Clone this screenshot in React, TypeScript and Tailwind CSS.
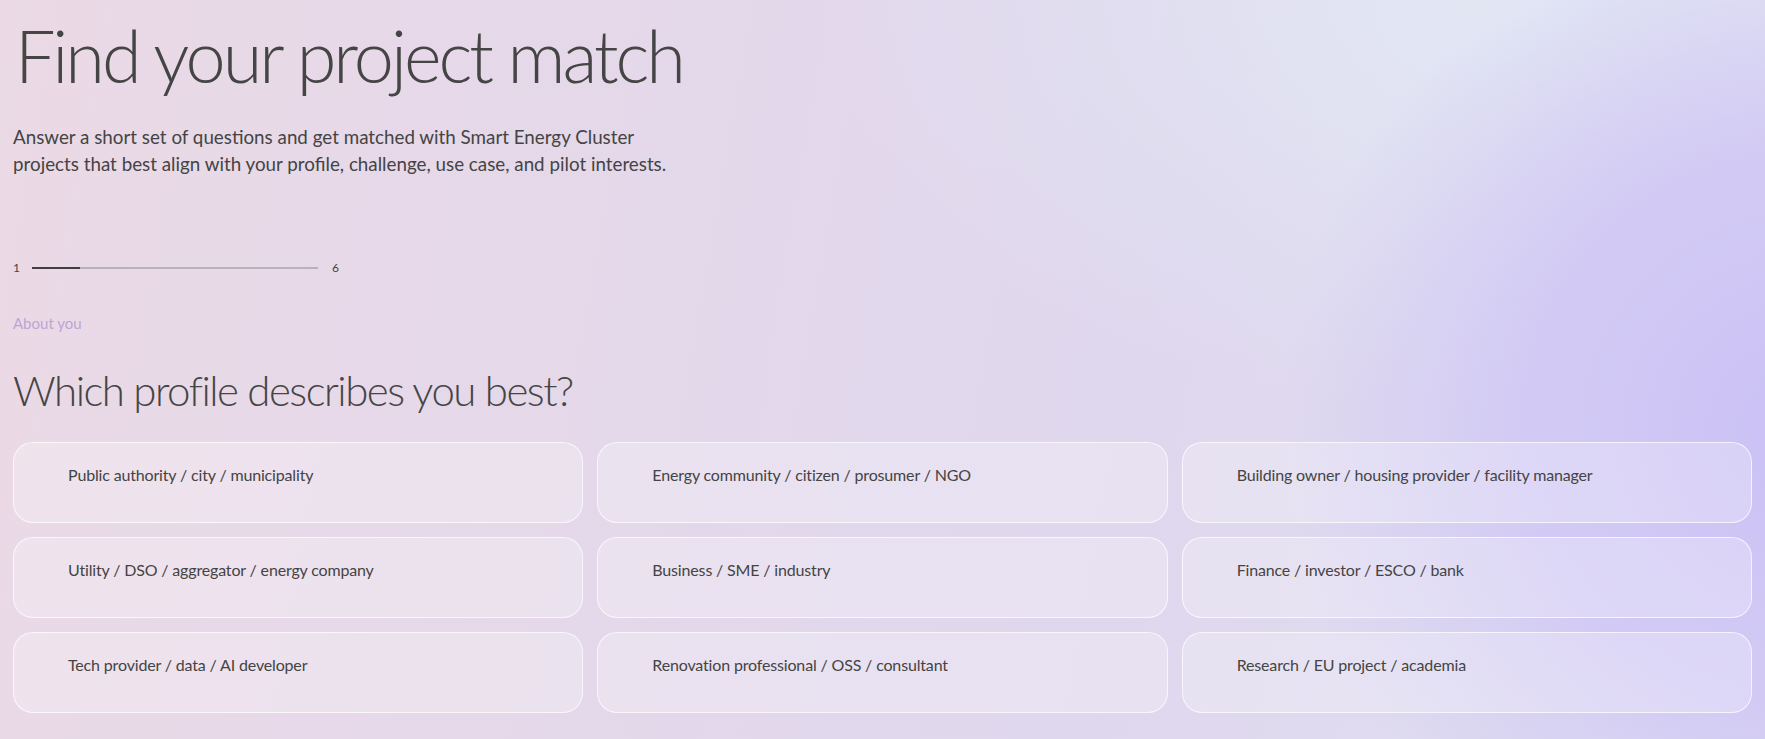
import React from 'react';

const profiles = [
  'Public authority / city / municipality',
  'Energy community / citizen / prosumer / NGO',
  'Building owner / housing provider / facility manager',
  'Utility / DSO / aggregator / energy company',
  'Business / SME / industry',
  'Finance / investor / ESCO / bank',
  'Tech provider / data / AI developer',
  'Renovation professional / OSS / consultant',
  'Research / EU project / academia',
];

const TOTAL_STEPS = 6;

const ProfileCard: React.FC<{ label: string }> = ({ label }) => (
  <button className="flex h-[81px] w-full flex-col items-start justify-start rounded-[20px] border border-white/70 bg-white/25 pl-[54px] pr-6 pt-[20px] text-left text-[16px] leading-6 tracking-[-0.01em] text-[#444] transition-colors hover:bg-white/40">
    <span>{label}</span>
  </button>
);

export default function App() {
  return (
    <div className="min-h-screen w-full bg-[radial-gradient(circle_520px_at_1800px_430px,#cbc1f6_0%,#d3cbf4_55%,rgba(214,208,243,0)_100%),radial-gradient(ellipse_700px_420px_at_1520px_0px,#e2e7f4_0%,rgba(226,230,244,0)_100%),linear-gradient(100deg,#ebdae5_0%,#e4d8ea_35%,#dfd7ee_65%,#dfe0f1_100%)] font-[Lato,sans-serif] text-[#444]">
      <div className="px-[13px] pb-6">
        {/* Header */}
        <h1 className="pt-[19px] pl-[2px] text-[72px] font-light leading-none tracking-[-0.042em] text-[#454545]">
          Find your project match
        </h1>
        <p className="mt-[32px] max-w-[680px] text-[18.8px] leading-[27px] text-[#444]">
          Answer a short set of questions and get matched with Smart Energy Cluster
          <br />
          projects that best align with your profile, challenge, use case, and pilot interests.
        </p>

        {/* Progress */}
        <div className="mt-[83px] flex h-4 items-center gap-[12px] text-[12px] leading-4 text-[#444]">
          <span>1</span>
          <div className="h-[2px] w-[286px] bg-[#b9b2bd]">
            <div className="h-full w-1/6 bg-[#3f3f3f]" />
          </div>
          <span className="pl-[2px]">{TOTAL_STEPS}</span>
        </div>

        <p className="mt-[37px] text-[15px] leading-5 text-[#bba6d6]">About you</p>

        <h2 className="mt-[34px] text-[42px] font-light leading-[1.1] tracking-[-0.036em] text-[#454545]">
          Which profile describes you best?
        </h2>

        {/* Options */}
        <div className="mt-[29px] grid grid-cols-3 gap-[14px]">
          {profiles.map((label) => (
            <ProfileCard key={label} label={label} />
          ))}
        </div>
      </div>
    </div>
  );
}
